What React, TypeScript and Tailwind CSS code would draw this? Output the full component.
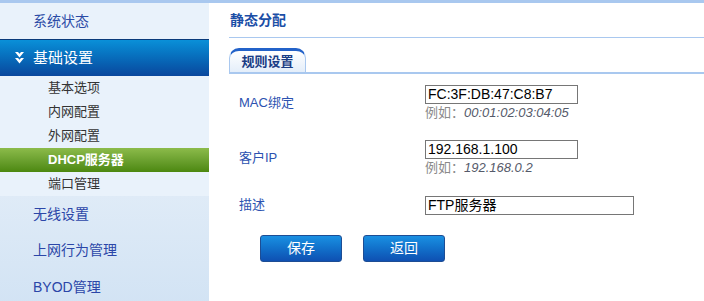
const font = { fontFamily: '"Liberation Sans", "Noto Sans CJK SC", sans-serif' };

const subItems = ['基本选项', '内网配置', '外网配置', 'DHCP服务器', '端口管理'];
const lowerItems = ['无线设置', '上网行为管理', 'BYOD管理'];

function DoubleChevron() {
  return (
    <svg width="9" height="12" viewBox="0 0 9 12" fill="white">
      <polygon points="0,0 3,0 4.5,1.8 6,0 9,0 4.5,5.5" />
      <polygon points="0,6 3,6 4.5,7.8 6,6 9,6 4.5,11.5" />
    </svg>
  );
}

function Sidebar() {
  return (
    <div className="flex w-[209px] shrink-0 flex-col overflow-hidden bg-[#e9f2fb]">
      <div className="flex h-[36px] shrink-0 items-center pl-[33px] text-[14px] text-[#2b4ba6]">系统状态</div>
      <div className="flex h-[37px] shrink-0 items-center gap-[9px] border-t border-[#0a3a7a] bg-gradient-to-b from-[#0a90d8] to-[#0a479d] pl-[15px] text-[15px] text-white">
        <DoubleChevron />
        <span>基础设置</span>
      </div>
      <div className="flex shrink-0 flex-col">
        {subItems.map((item) =>
          item === 'DHCP服务器' ? (
            <div
              key={item}
              className="flex h-[24px] items-center bg-gradient-to-b from-[#8cbb4a] to-[#4c880e] pl-[48px] text-[13px] font-bold text-white"
            >
              {item}
            </div>
          ) : (
            <div key={item} className="flex h-[24px] items-center pl-[48px] text-[13px] text-[#333]">
              {item}
            </div>
          )
        )}
      </div>
      <div className="flex flex-1 flex-col bg-gradient-to-b from-[#dfebf7] to-[#d2e3f4]">
        {lowerItems.map((item) => (
          <div key={item} className="flex h-[36.5px] shrink-0 items-center pl-[33px] text-[14px] text-[#2b46a8]">
            {item}
          </div>
        ))}
      </div>
    </div>
  );
}

function Field({
  label,
  value,
  hint,
  wide,
}: {
  label: string;
  value: string;
  hint?: string;
  wide?: boolean;
}) {
  return (
    <div className="flex">
      <div
        className="flex h-[18px] w-[195px] items-center pl-[9px] text-[13px] text-[#2c52b0]"
        style={{ marginTop: hint ? 9 : 0 }}
      >
        {label}
      </div>
      <div className="flex flex-col">
        <div
          className={`flex h-[19px] items-center border border-[#767676] px-[2px] text-[14px] text-black ${
            wide ? 'w-[209px]' : 'w-[153px]'
          }`}
        >
          {value}
        </div>
        {hint && (
          <div className="mt-[1px] text-[13px] leading-[16px] text-[#8a8a8a]">
            例如：<span className="italic text-[#555a6a]">{hint}</span>
          </div>
        )}
      </div>
    </div>
  );
}

export default function App() {
  return (
    <div className="flex h-[301px] w-[704px] flex-col overflow-hidden bg-white" style={font}>
      <div className="h-[3px] shrink-0 bg-[#a9c8ef]" />
      <div className="flex min-h-0 flex-1">
        <Sidebar />
        <div className="flex flex-1 flex-col pl-[20px]">
          <div className="flex h-[35px] items-center border-b border-[#a9c8ef] pl-[1px] text-[14px] font-bold text-[#1b4ea6]">
            静态分配
          </div>
          <div className="mt-[10px] flex border-b-2 border-[#a9c8ef]">
            <div className="flex h-[24px] w-[77px] items-center justify-center rounded-t-[10px] border border-b-0 border-t-[3px] border-[#a9c8ef] border-t-[#2362c9] bg-gradient-to-b from-white to-[#e4eefa] text-[13px] font-bold text-[#1a3d85]">
              规则设置
            </div>
          </div>
          <div className="mt-[11px] flex flex-col pl-[1px]">
            <Field label="MAC绑定" value="FC:3F:DB:47:C8:B7" hint="00:01:02:03:04:05" />
            <div className="h-[19px]" />
            <Field label="客户IP" value="192.168.1.100" hint="192.168.0.2" />
            <div className="h-[20px]" />
            <Field label="描述" value="FTP服务器" wide />
            <div className="ml-[30px] mt-[20px] flex gap-[21px]">
              <button className="h-[27px] w-[82px] rounded-[3px] border border-[#1d4d94] bg-gradient-to-b from-[#1a90e2] to-[#0f50b2] text-[14px] text-white">
                保存
              </button>
              <button className="h-[27px] w-[82px] rounded-[3px] border border-[#1d4d94] bg-gradient-to-b from-[#1a90e2] to-[#0f50b2] text-[14px] text-white">
                返回
              </button>
            </div>
          </div>
        </div>
      </div>
    </div>
  );
}
